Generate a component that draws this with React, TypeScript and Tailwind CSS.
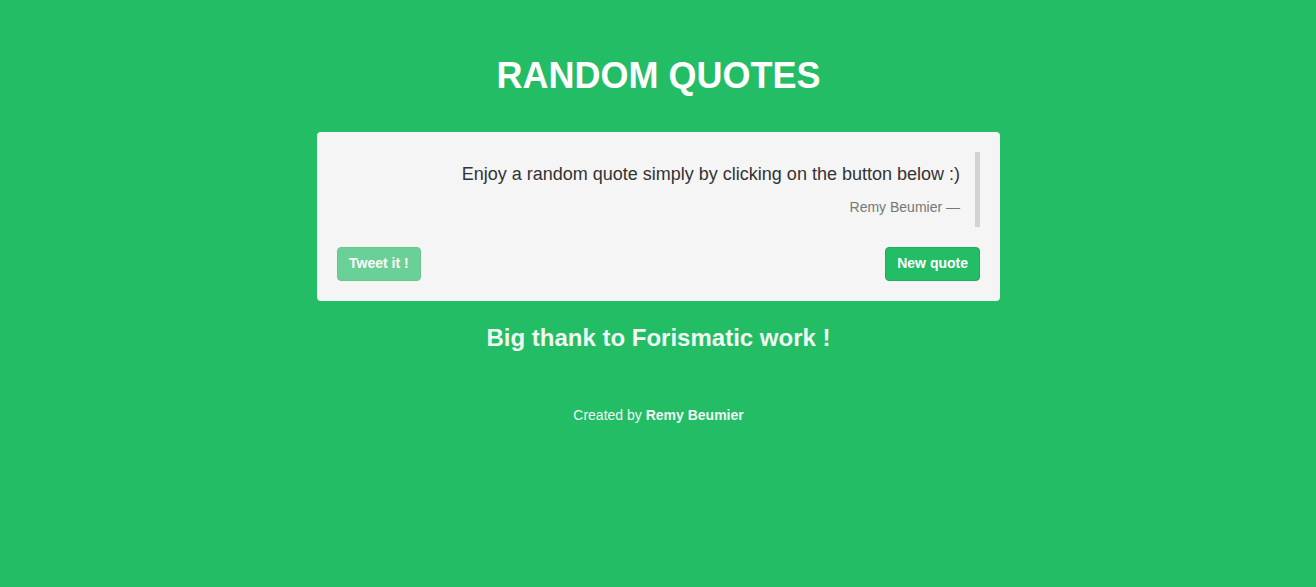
export default function App() {
  return (
    <div className="min-h-[587px] w-full bg-[#22bd65] font-['Liberation_Sans',Arial,sans-serif] text-white">
      <div className="mx-auto flex w-[684px] flex-col items-center pt-[56px] pl-[1px]">
        <h1 className="text-[36px] font-bold leading-[1.1]">RANDOM QUOTES</h1>

        <div className="mt-[36px] w-full rounded bg-[#f5f5f5] p-5">
          <blockquote className="mb-5 border-r-[5px] border-[#d2d2d2] py-[10px] pl-5 pr-[15px] text-right">
            <p className="mb-[10px] text-[18px] leading-[25px] text-[#333]">
              Enjoy a random quote simply by clicking on the button below :)
            </p>
            <footer className="text-[14px] leading-5 text-[#777]">Remy Beumier &mdash;</footer>
          </blockquote>

          <div className="flex items-center justify-between">
            <button className="h-[34px] rounded border border-[#1fae5d] bg-[#22bd65] px-[11px] text-[14px] font-bold text-white opacity-65">
              Tweet it !
            </button>
            <button className="h-[34px] rounded border border-[#1fae5d] bg-[#22bd65] px-[11px] text-[14px] font-bold text-white">
              New quote
            </button>
          </div>
        </div>

        <h3 className="mt-[24px] text-[24px] font-bold leading-[1.1] text-[#effaf3]">
          Big thank to Forismatic work !
        </h3>

        <p className="mt-[54px] text-[14px] leading-5 text-[#effaf3]">
          Created by <strong>Remy Beumier</strong>
        </p>
      </div>
    </div>
  );
}
